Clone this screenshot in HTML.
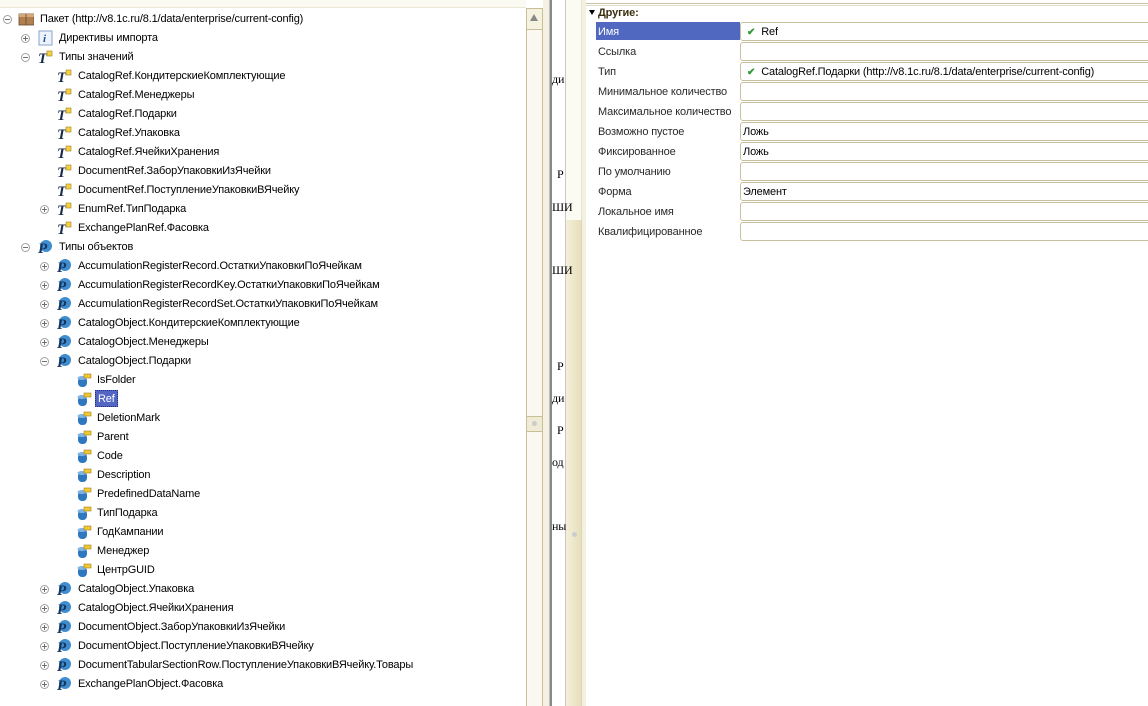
<!DOCTYPE html>
<html><head><meta charset="utf-8"><style>
*{margin:0;padding:0;box-sizing:border-box}
body{width:1148px;height:706px;overflow:hidden;background:#fff;font-family:"Liberation Sans",sans-serif;font-size:11px;color:#000;position:relative;letter-spacing:-0.15px}
.a{position:absolute}
.r{position:absolute;height:19px;line-height:19px;white-space:nowrap}
.tg{position:absolute;width:9px;height:9px;border:1px solid #a0a0a0;border-radius:50%;top:6px;background:#fff}
.tg:before{content:"";position:absolute;left:1px;top:3px;width:5px;height:1px;background:#707070}
.tg.p:after{content:"";position:absolute;left:3px;top:1px;width:1px;height:5px;background:#707070}
.ic{position:absolute;top:2px;width:16px;height:16px}
.tx{position:absolute;top:1px}
.lab{position:absolute;left:598px;height:20px;line-height:22px;color:#2a2a2a}
.val{position:absolute;left:740px;width:420px;height:19px;border:1px solid #c9c0a0;border-radius:3px;line-height:18px;padding-left:2px;background:#fff}
.ck{color:#2e9a2e;font-weight:bold;margin:0 6px 0 4px;font-size:10px}
.fr{position:absolute;font-family:"Liberation Serif",serif;font-size:12px;left:552px}
</style></head><body>
<div class="a" style="left:0;top:0;width:526px;height:8px;background:#fbfaf2;border-bottom:1px solid #ece8d4"></div>
<div class="a" style="left:526px;top:8px;width:17px;height:698px;background:#faf8f0;border-left:1px solid #c8bf98;border-right:1px solid #c8bf98"></div>
<div class="a" style="left:526px;top:8px;width:17px;height:22px;background:#f6f2e0;border:1px solid #c8bf98"></div>
<div class="a" style="left:530px;top:14px;width:0;height:0;border-left:4px solid transparent;border-right:4px solid transparent;border-bottom:7px solid #888"></div>
<div class="a" style="left:526px;top:416px;width:17px;height:16px;background:#f0ebd4;border:1px solid #c8bf98"></div>
<div class="a" style="left:532px;top:421px;width:5px;height:5px;border-radius:50%;background:#ccc"></div>
<div class="a" style="left:543px;top:0;width:6px;height:706px;background:#f5f2e4"></div>
<div class="a" style="left:549px;top:0;width:3px;height:706px;background:#8a8a8a;border-left:1px solid #bdbdbd"></div>
<div class="a" style="left:565px;top:0;width:1px;height:706px;background:#c8c8c8"></div>
<div class="a" style="left:566px;top:0;width:16px;height:220px;background:#fbfaf3;border-right:1px solid #e8e4d0"></div>
<div class="a" style="left:566px;top:220px;width:16px;height:486px;background:linear-gradient(90deg,#f4efd8,#e6dfbd);border-right:1px solid #ddd6b8"></div>
<div class="a" style="left:572px;top:532px;width:5px;height:5px;border-radius:50%;background:#ccc"></div>
<div class="a" style="left:582px;top:0;width:4px;height:706px;background:#f3f0e0"></div>
<div class="fr" style="top:72px">ди</div>
<div class="fr" style="top:167px;left:557px">Р</div>
<div class="fr" style="top:200px">ШИ</div>
<div class="fr" style="top:263px">ШИ</div>
<div class="fr" style="top:359px;left:557px">Р</div>
<div class="fr" style="top:391px">ди</div>
<div class="fr" style="top:423px;left:557px">Р</div>
<div class="fr" style="top:455px">од</div>
<div class="fr" style="top:519px">ны</div>

<svg width="0" height="0" style="position:absolute"><defs>
<g id="T"><text x="1" y="14" font-family="Liberation Serif" font-style="italic" font-weight="bold" font-size="15" fill="#1a2a4a">T</text><rect x="10" y="2" width="5" height="5" fill="#f5d040" stroke="#a08020" stroke-width="0.6"/></g>
<g id="P"><circle cx="9" cy="7" r="6" fill="#3f8ccf"/><text x="1" y="14" font-family="Liberation Serif" font-style="italic" font-weight="bold" font-size="15" fill="#15355e">P</text></g>
<g id="F"><rect x="2" y="5" width="9" height="10" rx="4" fill="#2f78c0"/><ellipse cx="6" cy="6" rx="4.5" ry="2" fill="#7fb4e4"/><rect x="8" y="2" width="7" height="4" fill="#f0c830" stroke="#a08020" stroke-width="0.6"/></g>
<g id="I"><rect x="2" y="1" width="13" height="14" fill="#eef3fb" stroke="#8aa0c8"/><text x="6" y="12" font-family="Liberation Serif" font-style="italic" font-weight="bold" font-size="11" fill="#2050a0">i</text></g>
<g id="K"><rect x="1" y="3" width="15" height="11" fill="#b08050" stroke="#6a4a2a" stroke-width="0.8"/><rect x="1" y="3" width="15" height="3" fill="#d4a878"/><line x1="8" y1="3" x2="8" y2="14" stroke="#6a4a2a" stroke-width="0.8"/></g>
</defs></svg>

<div class="r" style="top:9px;left:0"><span class="tg" style="left:3px"></span><svg class="ic" style="left:18px"><use href="#K"/></svg><span class="tx" style="left:40px">Пакет (http://v8.1c.ru/8.1/data/enterprise/current-config)</span></div>
<div class="r" style="top:28px;left:0"><span class="tg p" style="left:21px"></span><svg class="ic" style="left:37px"><use href="#I"/></svg><span class="tx" style="left:59px">Директивы импорта</span></div>
<div class="r" style="top:47px;left:0"><span class="tg" style="left:21px"></span><svg class="ic" style="left:37px"><use href="#T"/></svg><span class="tx" style="left:59px">Типы значений</span></div>
<div class="r" style="top:66px;left:0"><svg class="ic" style="left:56px"><use href="#T"/></svg><span class="tx" style="left:78px">CatalogRef.КондитерскиеКомплектующие</span></div>
<div class="r" style="top:85px;left:0"><svg class="ic" style="left:56px"><use href="#T"/></svg><span class="tx" style="left:78px">CatalogRef.Менеджеры</span></div>
<div class="r" style="top:104px;left:0"><svg class="ic" style="left:56px"><use href="#T"/></svg><span class="tx" style="left:78px">CatalogRef.Подарки</span></div>
<div class="r" style="top:123px;left:0"><svg class="ic" style="left:56px"><use href="#T"/></svg><span class="tx" style="left:78px">CatalogRef.Упаковка</span></div>
<div class="r" style="top:142px;left:0"><svg class="ic" style="left:56px"><use href="#T"/></svg><span class="tx" style="left:78px">CatalogRef.ЯчейкиХранения</span></div>
<div class="r" style="top:161px;left:0"><svg class="ic" style="left:56px"><use href="#T"/></svg><span class="tx" style="left:78px">DocumentRef.ЗаборУпаковкиИзЯчейки</span></div>
<div class="r" style="top:180px;left:0"><svg class="ic" style="left:56px"><use href="#T"/></svg><span class="tx" style="left:78px">DocumentRef.ПоступлениеУпаковкиВЯчейку</span></div>
<div class="r" style="top:199px;left:0"><span class="tg p" style="left:40px"></span><svg class="ic" style="left:56px"><use href="#T"/></svg><span class="tx" style="left:78px">EnumRef.ТипПодарка</span></div>
<div class="r" style="top:218px;left:0"><svg class="ic" style="left:56px"><use href="#T"/></svg><span class="tx" style="left:78px">ExchangePlanRef.Фасовка</span></div>
<div class="r" style="top:237px;left:0"><span class="tg" style="left:21px"></span><svg class="ic" style="left:37px"><use href="#P"/></svg><span class="tx" style="left:59px">Типы объектов</span></div>
<div class="r" style="top:256px;left:0"><span class="tg p" style="left:40px"></span><svg class="ic" style="left:56px"><use href="#P"/></svg><span class="tx" style="left:78px">AccumulationRegisterRecord.ОстаткиУпаковкиПоЯчейкам</span></div>
<div class="r" style="top:275px;left:0"><span class="tg p" style="left:40px"></span><svg class="ic" style="left:56px"><use href="#P"/></svg><span class="tx" style="left:78px">AccumulationRegisterRecordKey.ОстаткиУпаковкиПоЯчейкам</span></div>
<div class="r" style="top:294px;left:0"><span class="tg p" style="left:40px"></span><svg class="ic" style="left:56px"><use href="#P"/></svg><span class="tx" style="left:78px">AccumulationRegisterRecordSet.ОстаткиУпаковкиПоЯчейкам</span></div>
<div class="r" style="top:313px;left:0"><span class="tg p" style="left:40px"></span><svg class="ic" style="left:56px"><use href="#P"/></svg><span class="tx" style="left:78px">CatalogObject.КондитерскиеКомплектующие</span></div>
<div class="r" style="top:332px;left:0"><span class="tg p" style="left:40px"></span><svg class="ic" style="left:56px"><use href="#P"/></svg><span class="tx" style="left:78px">CatalogObject.Менеджеры</span></div>
<div class="r" style="top:351px;left:0"><span class="tg" style="left:40px"></span><svg class="ic" style="left:56px"><use href="#P"/></svg><span class="tx" style="left:78px">CatalogObject.Подарки</span></div>
<div class="r" style="top:370px;left:0"><svg class="ic" style="left:76px"><use href="#F"/></svg><span class="tx" style="left:97px">IsFolder</span></div>
<div class="r" style="top:389px;left:0"><svg class="ic" style="left:76px"><use href="#F"/></svg><span class="tx" style="left:95px;top:1px;height:17px;line-height:16px;padding:0 2px;background:#5366c4;color:#fff;border:1px dotted #203080">Ref</span></div>
<div class="r" style="top:408px;left:0"><svg class="ic" style="left:76px"><use href="#F"/></svg><span class="tx" style="left:97px">DeletionMark</span></div>
<div class="r" style="top:427px;left:0"><svg class="ic" style="left:76px"><use href="#F"/></svg><span class="tx" style="left:97px">Parent</span></div>
<div class="r" style="top:446px;left:0"><svg class="ic" style="left:76px"><use href="#F"/></svg><span class="tx" style="left:97px">Code</span></div>
<div class="r" style="top:465px;left:0"><svg class="ic" style="left:76px"><use href="#F"/></svg><span class="tx" style="left:97px">Description</span></div>
<div class="r" style="top:484px;left:0"><svg class="ic" style="left:76px"><use href="#F"/></svg><span class="tx" style="left:97px">PredefinedDataName</span></div>
<div class="r" style="top:503px;left:0"><svg class="ic" style="left:76px"><use href="#F"/></svg><span class="tx" style="left:97px">ТипПодарка</span></div>
<div class="r" style="top:522px;left:0"><svg class="ic" style="left:76px"><use href="#F"/></svg><span class="tx" style="left:97px">ГодКампании</span></div>
<div class="r" style="top:541px;left:0"><svg class="ic" style="left:76px"><use href="#F"/></svg><span class="tx" style="left:97px">Менеджер</span></div>
<div class="r" style="top:560px;left:0"><svg class="ic" style="left:76px"><use href="#F"/></svg><span class="tx" style="left:97px">ЦентрGUID</span></div>
<div class="r" style="top:579px;left:0"><span class="tg p" style="left:40px"></span><svg class="ic" style="left:56px"><use href="#P"/></svg><span class="tx" style="left:78px">CatalogObject.Упаковка</span></div>
<div class="r" style="top:598px;left:0"><span class="tg p" style="left:40px"></span><svg class="ic" style="left:56px"><use href="#P"/></svg><span class="tx" style="left:78px">CatalogObject.ЯчейкиХранения</span></div>
<div class="r" style="top:617px;left:0"><span class="tg p" style="left:40px"></span><svg class="ic" style="left:56px"><use href="#P"/></svg><span class="tx" style="left:78px">DocumentObject.ЗаборУпаковкиИзЯчейки</span></div>
<div class="r" style="top:636px;left:0"><span class="tg p" style="left:40px"></span><svg class="ic" style="left:56px"><use href="#P"/></svg><span class="tx" style="left:78px">DocumentObject.ПоступлениеУпаковкиВЯчейку</span></div>
<div class="r" style="top:655px;left:0"><span class="tg p" style="left:40px"></span><svg class="ic" style="left:56px"><use href="#P"/></svg><span class="tx" style="left:78px">DocumentTabularSectionRow.ПоступлениеУпаковкиВЯчейку.Товары</span></div>
<div class="r" style="top:674px;left:0"><span class="tg p" style="left:40px"></span><svg class="ic" style="left:56px"><use href="#P"/></svg><span class="tx" style="left:78px">ExchangePlanObject.Фасовка</span></div>

<div class="a" style="left:586px;top:3px;width:562px;height:1px;background:#c8c0a0"></div>
<div class="a" style="left:586px;top:5px;width:562px;height:1px;background:#e0dac4"></div>
<div class="a" style="left:589px;top:10px;width:0;height:0;border-left:3.5px solid transparent;border-right:3.5px solid transparent;border-top:5px solid #000"></div>
<div class="a" style="left:598px;top:6px;font-weight:bold;color:#3a3010;line-height:14px">Другие:</div>
<div class="a" style="left:596px;top:22px;width:144px;height:18px;background:#5068c0"></div>
<div class="lab" style="top:21px;color:#fff">Имя</div>
<div class="lab" style="top:41px">Ссылка</div>
<div class="lab" style="top:61px">Тип</div>
<div class="lab" style="top:81px">Минимальное количество</div>
<div class="lab" style="top:101px">Максимальное количество</div>
<div class="lab" style="top:121px">Возможно пустое</div>
<div class="lab" style="top:141px">Фиксированное</div>
<div class="lab" style="top:161px">По умолчанию</div>
<div class="lab" style="top:181px">Форма</div>
<div class="lab" style="top:201px">Локальное имя</div>
<div class="lab" style="top:221px">Квалифицированное</div>
<div class="val" style="top:22px"><span class="ck">✔</span>Ref</div>
<div class="val" style="top:42px"></div>
<div class="val" style="top:62px"><span class="ck">✔</span>CatalogRef.Подарки (http://v8.1c.ru/8.1/data/enterprise/current-config)</div>
<div class="val" style="top:82px"></div>
<div class="val" style="top:102px"></div>
<div class="val" style="top:122px">Ложь</div>
<div class="val" style="top:142px">Ложь</div>
<div class="val" style="top:162px"></div>
<div class="val" style="top:182px">Элемент</div>
<div class="val" style="top:202px"></div>
<div class="val" style="top:222px"></div>
</body></html>
